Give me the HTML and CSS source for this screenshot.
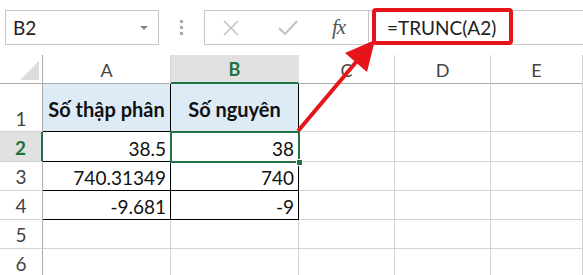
FILE: index.html
```html
<!DOCTYPE html>
<html lang="vi">
<head>
    <meta charset="UTF-8">
    <meta name="viewport" content="width=device-width, initial-scale=1.0">
    <title>TRUNC</title>
    <link rel="stylesheet" href="styles.css">
</head>
<body>

    <div class="sheet">
        <div class="toolbar">
            <div class="name-box">
                <span class="name-text">B2</span>
                <span class="name-arrow"></span>
            </div>
            <div class="dots"><i></i><i></i><i></i></div>
            <div class="formula-bar">
                <div class="formula-icons">
                    <svg class="icon-x" width="18" height="18" viewBox="0 0 18 18">
                        <path d="M2 2 L16 16 M16 2 L2 16" stroke="#c4c4c4" stroke-width="1.6" fill="none"/>
                    </svg>
                    <svg class="icon-check" width="22" height="18" viewBox="0 0 22 18">
                        <path d="M2 9 L8 15 L20 2" stroke="#c4c4c4" stroke-width="2.2" fill="none"/>
                    </svg>
                    <span class="fx">fx</span>
                </div>
                <div class="formula-text">=TRUNC(A2)</div>
            </div>
        </div>

        <div class="grid">
            <div class="corner"><span class="corner-tri"></span></div>
            <div class="col-head">A</div>
            <div class="col-head active">B</div>
            <div class="col-head">C</div>
            <div class="col-head">D</div>
            <div class="col-head">E</div>

            <div class="row-head tall">1</div>
            <div class="cell table title">Số thập phân</div>
            <div class="cell table title">Số nguyên</div>
            <div class="cell"></div>
            <div class="cell"></div>
            <div class="cell"></div>

            <div class="row-head active">2</div>
            <div class="cell table num">38.5</div>
            <div class="cell table num selected">38<span class="handle"></span></div>
            <div class="cell"></div>
            <div class="cell"></div>
            <div class="cell"></div>

            <div class="row-head">3</div>
            <div class="cell table num">740.31349</div>
            <div class="cell table num">740</div>
            <div class="cell"></div>
            <div class="cell"></div>
            <div class="cell"></div>

            <div class="row-head">4</div>
            <div class="cell table num">-9.681</div>
            <div class="cell table num">-9</div>
            <div class="cell"></div>
            <div class="cell"></div>
            <div class="cell"></div>

            <div class="row-head">5</div>
            <div class="cell"></div>
            <div class="cell"></div>
            <div class="cell"></div>
            <div class="cell"></div>
            <div class="cell"></div>

            <div class="row-head">6</div>
            <div class="cell"></div>
            <div class="cell"></div>
            <div class="cell"></div>
            <div class="cell"></div>
            <div class="cell"></div>
        </div>

        <!-- chu thich: khung do va mui ten -->
        <svg class="callout" width="583" height="275" viewBox="0 0 583 275">
            <rect x="374" y="10" width="137" height="33" rx="2" fill="none" stroke="#e8141c" stroke-width="4"/>
            <line x1="298" y1="131" x2="357" y2="61" stroke="#e8141c" stroke-width="4"/>
            <polygon points="375,40 345,53 367,72" fill="#e8141c"/>
        </svg>
    </div>

</body>
</html>
```

FILE: styles.css
```css
* {
    margin: 0;
    padding: 0;
    box-sizing: border-box;
}

body {
    background-color: #fff;
    font-family: 'Lato', 'Liberation Sans', sans-serif;
    color: #222;
    width: 583px;
    height: 275px;
    overflow: hidden;
}

.sheet {
    position: relative;
    width: 583px;
    height: 275px;
    overflow: hidden;
}

/* thanh cong thuc */
.toolbar {
    height: 55px;
    display: flex;
    align-items: flex-start;
    padding-top: 10px;
}

.name-box {
    margin-left: 5px;
    width: 154px;
    height: 35px;
    border: 1px solid #c6c6c6;
    display: flex;
    align-items: center;
    justify-content: space-between;
    padding: 0 10px 0 7px;
}

.name-text {
    font-size: 19px;
    color: #222;
}

.name-arrow {
    width: 0;
    height: 0;
    border-left: 4px solid transparent;
    border-right: 4px solid transparent;
    border-top: 4px solid #8a8a8a;
}

.dots {
    width: 45px;
    height: 35px;
    display: flex;
    flex-direction: column;
    align-items: center;
    justify-content: center;
    gap: 3px;
}

.dots i {
    display: block;
    width: 3px;
    height: 3px;
    background-color: #a8a8a8;
}

.formula-bar {
    flex: 1;
    height: 35px;
    border: 1px solid #c6c6c6;
    border-right: none;
    display: flex;
}

.formula-icons {
    width: 164px;
    border-right: 1px solid #c6c6c6;
    display: flex;
    align-items: center;
    padding-left: 17px;
}

.icon-x {
    margin-right: 37px;
}

.icon-check {
    margin-right: 33px;
}

.fx {
    font-family: 'Liberation Serif', serif;
    font-style: italic;
    font-size: 21px;
    color: #555;
    letter-spacing: -1px;
}

.formula-text {
    padding-left: 18px;
    font-size: 19px;
    line-height: 33px;
    color: #222;
}

/* bang tinh */
.grid {
    display: grid;
    grid-template-columns: 43px 128px 128px 96px 96px 1fr;
    grid-template-rows: 29px 48px 30px 29px 29px 29px 29px;
}

.corner {
    position: relative;
    border-right: 1px solid #ababab;
    border-bottom: 1px solid #ababab;
}

.corner-tri {
    position: absolute;
    right: 3px;
    bottom: 3px;
    width: 0;
    height: 0;
    border-left: 19px solid transparent;
    border-bottom: 19px solid #dcdcdc;
}

.col-head {
    border-right: 1px solid #d4d4d4;
    border-bottom: 1px solid #ababab;
    display: flex;
    align-items: center;
    justify-content: center;
    font-size: 18px;
    color: #444;
    padding-top: 1px;
}

.col-head.active {
    background-color: #e1e1e1;
    color: #217346;
    font-weight: bold;
    border-bottom: 2px solid #217346;
    border-right-color: #e1e1e1;
}

.row-head {
    border-right: 1px solid #ababab;
    border-bottom: 1px solid #d4d4d4;
    display: flex;
    align-items: flex-end;
    justify-content: center;
    font-size: 19px;
    color: #444;
    line-height: 1;
    padding-bottom: 4px;
}

.row-head.tall {
    padding-bottom: 3px;
}

.row-head.active {
    background-color: #e1e1e1;
    color: #217346;
    font-weight: bold;
    border-right: 2px solid #217346;
}

.cell {
    border-right: 1px solid #d4d4d4;
    border-bottom: 1px solid #d4d4d4;
    font-size: 19px;
    color: #111;
}

.cell.table {
    border-right-color: #000;
    border-bottom-color: #000;
}

.cell.title {
    background-color: #ddebf7;
    font-weight: bold;
    font-size: 20px;
    display: flex;
    align-items: center;
    justify-content: center;
    padding-top: 2px;
}

.cell.num {
    display: flex;
    align-items: flex-end;
    justify-content: flex-end;
    padding-right: 4px;
    padding-bottom: 3px;
    line-height: 1;
}

.cell.selected {
    position: relative;
}

.cell.selected::after {
    content: '';
    position: absolute;
    left: -1px;
    top: -1px;
    right: -2px;
    bottom: -2px;
    border: 2px solid #217346;
}

.handle {
    position: absolute;
    right: -5px;
    bottom: -5px;
    width: 7px;
    height: 7px;
    background-color: #217346;
    border: 1px solid #fff;
    z-index: 2;
}

.callout {
    position: absolute;
    left: 0;
    top: 0;
    pointer-events: none;
}
```
